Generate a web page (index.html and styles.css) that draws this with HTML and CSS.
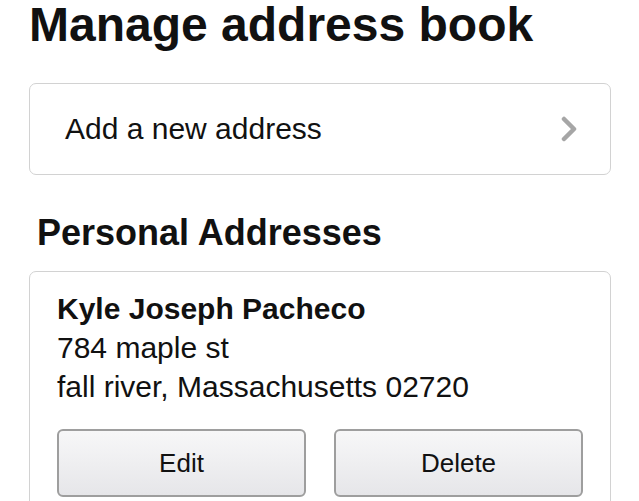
FILE: index.html
```html
<!DOCTYPE html>
<html lang="en">
<head>
  <meta charset="UTF-8">
  <title>Manage address book</title>
  <link rel="stylesheet" href="styles.css">
</head>
<body>
  <div class="page">
    <h1>Manage address book</h1>

    <!-- add new address row -->
    <a class="add-row" href="#">
      <span>Add a new address</span>
      <svg class="chevron" width="16" height="26" viewBox="0 0 16 26">
        <path d="M3 3 L13 13 L3 23" fill="none" stroke="#a6a6a6" stroke-width="4.5" stroke-linecap="round" stroke-linejoin="round"/>
      </svg>
    </a>

    <h2>Personal Addresses</h2>

    <div class="card">
      <div class="name">Kyle Joseph Pacheco</div>
      <div class="line">784 maple st</div>
      <div class="line">fall river, Massachusetts 02720</div>
      <div class="actions">
        <button class="btn">Edit</button>
        <button class="btn">Delete</button>
      </div>
    </div>
  </div>
</body>
</html>
```

FILE: styles.css
```css
body {
  margin: 0;
  background: #fff;
  font-family: "Liberation Sans", Arial, sans-serif;
  color: #111;
}
.page {
  padding: 1px 28px 0 29px;
}
h1 {
  margin: 0;
  font-size: 48px;
  line-height: 48px;
  font-weight: bold;
  color: #111;
}
.add-row {
  display: flex;
  align-items: center;
  justify-content: space-between;
  box-sizing: border-box;
  height: 92px;
  margin-top: 34px;
  padding: 0 33px 0 35px;
  border: 1px solid #d2d2d2;
  border-radius: 7px;
  color: #111;
  text-decoration: none;
  font-size: 30px;
}
.chevron {
  display: block;
}
h2 {
  margin: 38px 0 0 8px;
  font-size: 36px;
  line-height: 40px;
  font-weight: bold;
}
.card {
  margin-top: 18px;
  padding: 17px 27px 30px;
  border: 1px solid #d2d2d2;
  border-radius: 7px;
}
.name {
  font-size: 30px;
  line-height: 39px;
  font-weight: bold;
}
.line {
  font-size: 30px;
  line-height: 39px;
}
.actions {
  display: flex;
  gap: 28px;
  margin-top: 23px;
}
.btn {
  flex: 1;
  height: 68px;
  border: 2px solid #9e9e9e;
  border-radius: 6px;
  background: linear-gradient(#f7f7f8, #e6e6e9);
  font-family: "Liberation Sans", Arial, sans-serif;
  font-size: 26px;
  color: #111;
}
```
